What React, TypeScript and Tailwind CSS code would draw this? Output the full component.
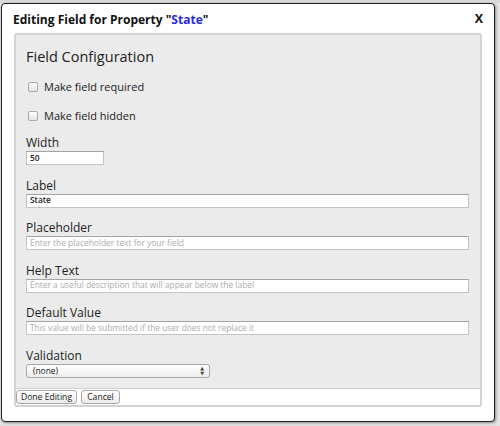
const fields = [
  { label: "Label", value: "State", placeholder: "" },
  { label: "Placeholder", value: "", placeholder: "Enter the placeholder text for your field" },
  { label: "Help Text", value: "", placeholder: "Enter a useful description that will appear below the label" },
  { label: "Default Value", value: "", placeholder: "This value will be submitted if the user does not replace it" },
];

const font = { fontFamily: '"Open Sans", "DejaVu Sans", sans-serif' };

function Checkbox({ label }: { label: string }) {
  return (
    <label className="flex h-[20px] items-center gap-[6px] pl-[2px] text-[11px] text-[#222]">
      <span className="h-[10px] w-[10px] rounded-[2px] border border-[#a9a9a9] bg-gradient-to-b from-white to-[#e4e4e4]" />
      {label}
    </label>
  );
}

function FieldLabel({ children }: { children: string }) {
  return <div className="h-[16px] text-[12px] leading-[16px] text-[#222]">{children}</div>;
}

function TextField({ label, value, placeholder, w }: { label: string; value: string; placeholder: string; w?: string }) {
  return (
    <div className="mb-[12.6px]">
      <FieldLabel>{label}</FieldLabel>
      <div
        className={`flex h-[14px] items-center border border-[#c4c4c4] border-t-[#a3a3a3] bg-white px-[3px] text-[8.4px] ${w ?? "w-[443px]"}`}
      >
        {value ? (
          <span className="font-semibold text-[#222]">{value}</span>
        ) : (
          <span className="text-[#ababab]">{placeholder}</span>
        )}
      </div>
    </div>
  );
}

function Button({ children, w }: { children: string; w: string }) {
  return (
    <button
      className={`flex h-[14px] items-center justify-center rounded-[3px] border border-[#a8a8a8] bg-gradient-to-b from-white to-[#ececec] text-[8.6px] text-[#222] ${w}`}
    >
      {children}
    </button>
  );
}

export default function App() {
  return (
    <div className="relative h-[426px] w-[500px] overflow-hidden bg-[#e4e4e4]" style={font}>
      <div className="absolute left-0 right-0 top-0 h-[3px] bg-[#d8d8d8]" />
      <div className="relative ml-[1px] mt-[3px] h-[419px] w-[494px] rounded-[4px] border border-[#1c1c1c] bg-white shadow-[1px_1px_3px_rgba(0,0,0,0.4)]">
        <div className="flex h-[29px] items-center justify-between pl-[11px] pr-[11px] pt-[2px] text-[12px] font-bold text-[#111]">
          <span>
            Editing Field for Property "<span className="text-[#2a2af0]">State</span>"
          </span>
          <span className="text-[12.5px]">X</span>
        </div>
        <div className="ml-[12px] w-[468px] rounded-[3px] border-2 border-[#d2d2d2] bg-[#ebebeb]">
          <div className="pl-[10px] pt-[12px]">
            <div className="h-[20px] text-[14.5px] leading-[20px] text-[#222]">Field Configuration</div>
            <div className="mt-[10px]">
              <Checkbox label="Make field required" />
            </div>
            <div className="mt-[9px]">
              <Checkbox label="Make field hidden" />
            </div>
            <div className="mt-[9px]">
              <TextField label="Width" value="50" placeholder="" w="w-[78px]" />
            </div>
            {fields.map((f) => (
              <TextField key={f.label} label={f.label} value={f.value} placeholder={f.placeholder} />
            ))}
            <div className="pb-[10px]">
              <FieldLabel>Validation</FieldLabel>
              <div className="relative flex h-[14px] w-[184px] items-center rounded-[3px] border border-[#a8a8a8] bg-gradient-to-b from-white to-[#ededed] pl-[6px] text-[8.4px] text-[#222]">
                (none)
                <span className="absolute right-[5px] top-[1px] flex flex-col text-[5px] leading-[5px] text-[#444]">
                  <span>▲</span>
                  <span>▼</span>
                </span>
              </div>
            </div>
          </div>
          <div className="flex h-[17px] items-center gap-[4px] border-t border-[#cfcfcf] bg-white">
            <Button w="w-[61px]">Done Editing</Button>
            <Button w="w-[39px]">Cancel</Button>
          </div>
        </div>
      </div>
    </div>
  );
}
